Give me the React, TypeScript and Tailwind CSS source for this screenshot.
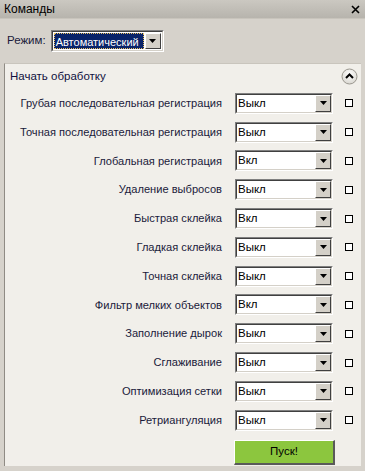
import { FC } from 'react';

const rows: Array<{ label: string; value: string }> = [
  { label: 'Грубая последовательная регистрация', value: 'Выкл' },
  { label: 'Точная последовательная регистрация', value: 'Выкл' },
  { label: 'Глобальная регистрация', value: 'Вкл' },
  { label: 'Удаление выбросов', value: 'Выкл' },
  { label: 'Быстрая склейка', value: 'Вкл' },
  { label: 'Гладкая склейка', value: 'Выкл' },
  { label: 'Точная склейка', value: 'Выкл' },
  { label: 'Фильтр мелких объектов', value: 'Вкл' },
  { label: 'Заполнение дырок', value: 'Выкл' },
  { label: 'Сглаживание', value: 'Выкл' },
  { label: 'Оптимизация сетки', value: 'Выкл' },
  { label: 'Ретриангуляция', value: 'Выкл' },
];

// classic win9x style drop button
const DropButton: FC = () => (
  <div className="w-[16px] h-full flex items-center justify-center bg-[#d4d0c8] border-t border-l border-t-[#ffffff] border-l-[#ffffff] border-b border-r border-b-[#404040] border-r-[#404040]">
    <svg width="7" height="4" viewBox="0 0 7 4">
      <polygon points="0,0 7,0 3.5,4" fill="#000" />
    </svg>
  </div>
);

const Select: FC<{ value: string }> = ({ value }) => (
  <div className="w-[98px] h-[21px] flex border-t border-l border-t-[#808080] border-l-[#808080] border-b border-r border-b-[#ffffff] border-r-[#ffffff]">
    <div className="flex-1 flex border-t border-l border-t-[#404040] border-l-[#404040] border-b border-r border-b-[#d4d0c8] border-r-[#d4d0c8] bg-white">
      <span className="flex-1 pl-[1px] leading-[17px] text-[11.5px] text-black">{value}</span>
      <DropButton />
    </div>
  </div>
);

export default function App() {
  return (
    <div
      className="w-[365px] h-[471px] bg-[#d6d2cb] flex flex-col overflow-hidden"
      style={{ fontFamily: '"Liberation Sans", Arial, sans-serif' }}
    >
      {/* title bar */}
      <div className="h-[19px] flex items-center justify-between px-[4px] bg-gradient-to-b from-[#cbc8c1] to-[#b7b4ad] border-b border-[#c8c4bc]">
        <span className="text-[12px] text-black">Команды</span>
        <svg width="9" height="9" viewBox="0 0 9 9" className="mr-[1px]">
          <path d="M1 1 L8 8 M8 1 L1 8" stroke="#000" strokeWidth="1.6" />
        </svg>
      </div>

      {/* mode */}
      <div className="flex items-center h-[44px] pl-[7px] gap-[5px]">
        <span className="text-[11.5px] text-[#1a1a3a]">Режим:</span>
        <div className="w-[113px] h-[22px] flex border-t border-l border-t-[#808080] border-l-[#808080] border-b border-r border-b-[#ffffff] border-r-[#ffffff]">
          <div className="flex-1 flex p-[1px] bg-white border-t border-l border-t-[#404040] border-l-[#404040] border-b border-r border-b-[#d4d0c8] border-r-[#d4d0c8]">
            <span className="flex-1 bg-[#0a246a] text-white text-[11px] leading-[16px] pl-[1px] border border-dotted border-[#e8c060] mr-[1px] whitespace-nowrap overflow-hidden">
              Автоматический
            </span>
            <DropButton />
          </div>
        </div>
      </div>

      {/* panel */}
      <div className="mx-[4px] h-[403px] bg-[#f1efea] border-l border-t border-l-[#8f8b84] border-t-[#c9c5bd] flex flex-col">
        <div className="h-[25px] flex items-center justify-between pl-[5px] pr-[3px]">
          <span className="text-[11.5px] text-[#101040]">Начать обработку</span>
          <svg width="17" height="17" viewBox="0 0 17 17">
            <defs>
              <radialGradient id="g" cx="50%" cy="35%" r="60%">
                <stop offset="0%" stopColor="#ffffff" />
                <stop offset="100%" stopColor="#dcdad4" />
              </radialGradient>
            </defs>
            <circle cx="8.5" cy="8.5" r="7.5" fill="url(#g)" stroke="#9a978f" />
            <path d="M5 10 L8.5 6.5 L12 10" fill="none" stroke="#000" strokeWidth="2" />
          </svg>
        </div>

        {rows.map((row, i) => (
          <div key={i} className="h-[28.8px] flex items-center pr-[8px]">
            <span className="flex-1 text-right pr-[13px] text-[11.1px] text-[#1a1a3a] whitespace-nowrap">{row.label}</span>
            <Select value={row.value} />
            <div className="ml-[12px] w-[8px] h-[8px] border border-black bg-white" />
          </div>
        ))}

        <div className="flex pl-[229px] mt-[5px]">
          <button className="w-[101px] h-[25px] bg-[#8cc63e] text-[11.5px] text-black border-t border-l border-t-[#ffffff] border-l-[#ffffff] border-b-2 border-r-2 border-b-[#5a5a5a] border-r-[#5a5a5a]">
            Пуск!
          </button>
        </div>
      </div>
    </div>
  );
}
